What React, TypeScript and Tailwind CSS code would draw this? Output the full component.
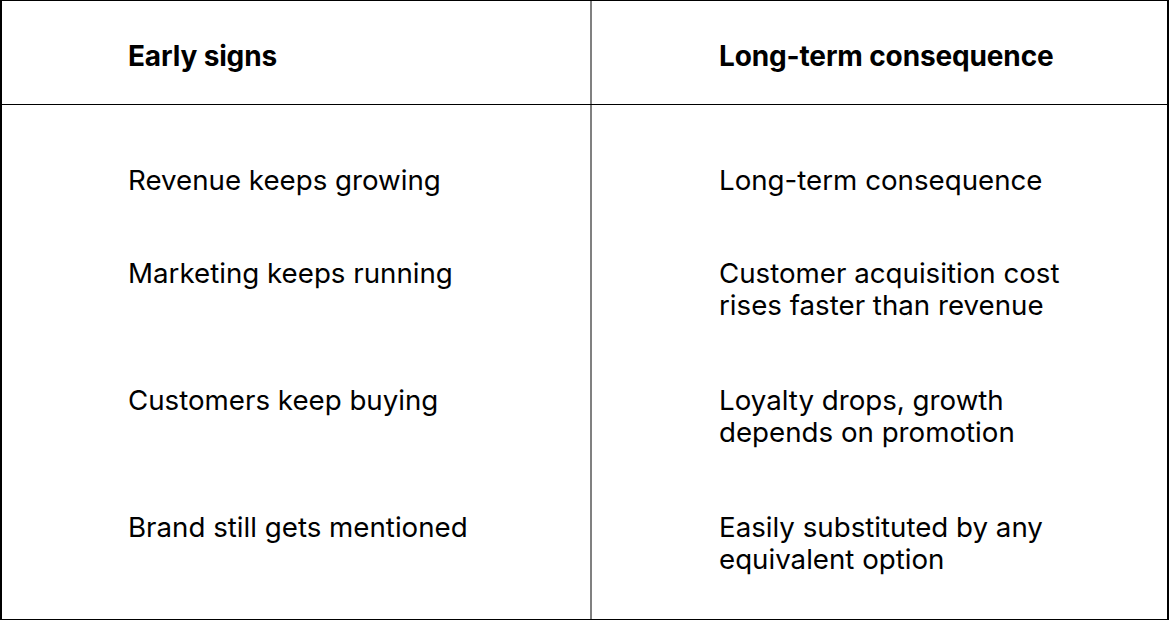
const rows = [
  { left: "Revenue keeps growing", right: "Long-term consequence", pad: "pt-[59px]" },
  { left: "Marketing keeps running", right: "Customer acquisition cost rises faster than revenue", pad: "pt-[61px]" },
  { left: "Customers keep buying", right: "Loyalty drops, growth depends on promotion", pad: "pt-[63px]" },
  { left: "Brand still gets mentioned", right: "Easily substituted by any equivalent option", pad: "pt-[63px]" },
];

export default function App() {
  return (
    <div
      className="w-[1170px] h-[620px] bg-white text-black"
      style={{ fontFamily: "Inter, 'Noto Sans', sans-serif" }}
    >
      <div className="flex flex-col w-[1169px] h-[620px] border-t border-b border-l-2 border-r-2 border-black">
        {/* header */}
        <div className="grid grid-cols-[588px_1fr] border-b border-black">
          <div className="h-[103px] pl-[126px] pt-[39px] text-[28px] leading-[32px] font-bold tracking-[-0.005em]">
            Early signs
          </div>
          <div className="h-[103px] pl-[127px] pt-[39px] text-[28px] leading-[32px] font-bold tracking-[-0.005em] border-l-2 border-[#808080]">
            Long-term consequence
          </div>
        </div>

        {/* body */}
        <div className="flex flex-col flex-1">
          {rows.map((r, i) => (
            <div
              key={i}
              className={"grid grid-cols-[588px_1fr] " + (i === rows.length - 1 ? "flex-1" : "")}
            >
              <div className={"pl-[126px] text-[27.7px] leading-[32px] " + r.pad}>{r.left}</div>
              <div className={"pl-[127px] pr-[100px] text-[27.7px] leading-[32px] border-l-2 border-[#808080] " + r.pad}>
                {r.right}
              </div>
            </div>
          ))}
        </div>
      </div>
    </div>
  );
}
